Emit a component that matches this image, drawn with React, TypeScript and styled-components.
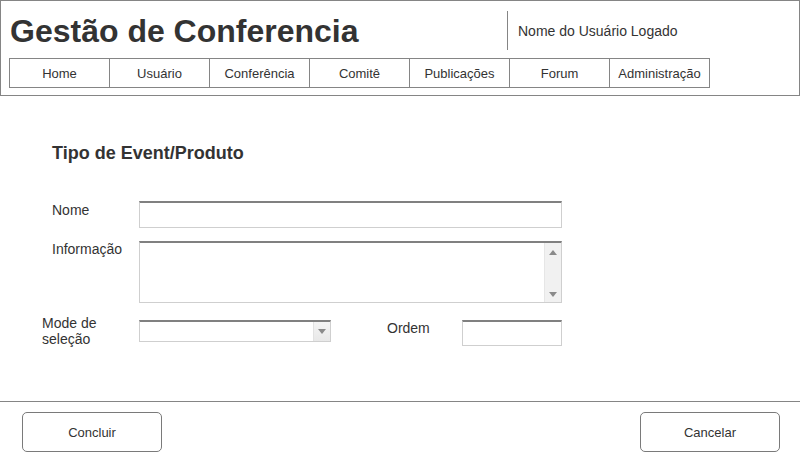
import React from "react";
import styled, { createGlobalStyle } from "styled-components";

const GlobalStyle = createGlobalStyle`
  html, body { margin: 0; padding: 0; background: #ffffff; }
  body { font-family: "Liberation Sans", Arial, sans-serif; color: #333333; }
  * { box-sizing: border-box; }
`;

const Page = styled.div`
  width: 800px;
  height: 452px;
  display: flex;
  flex-direction: column;
  overflow: hidden;
`;

const Header = styled.header`
  height: 96px;
  border: 1px solid #858585;
  padding: 0 0 7px 8px;
  display: flex;
  flex-direction: column;
`;

const TopRow = styled.div`
  height: 57px;
  display: flex;
  align-items: flex-start;
`;

const Title = styled.h1`
  margin: 12px 0 0 1px;
  width: 497px;
  font-size: 32px;
  line-height: 37px;
  font-weight: bold;
  color: #333333;
`;

const UserBlock = styled.div`
  margin-top: 10px;
  height: 39px;
  border-left: 1px solid #858585;
  padding-left: 10px;
  display: flex;
  align-items: center;
  font-size: 14px;
  line-height: 16px;
  color: #333333;
`;

const Nav = styled.nav`
  display: flex;
  border-left: 1px solid #858585;
  align-self: flex-start;
`;

const NavItem = styled.div`
  width: 100px;
  height: 30px;
  border-top: 1px solid #858585;
  border-bottom: 1px solid #858585;
  border-right: 1px solid #858585;
  display: flex;
  align-items: center;
  justify-content: center;
  font-size: 13px;
  color: #333333;
`;

const Main = styled.main`
  flex: 1;
  padding: 47px 0 0 42px;
  display: flex;
  flex-direction: column;
`;

const SectionTitle = styled.h2`
  margin: 0 0 1px 10px;
  font-size: 18px;
  line-height: 21px;
  font-weight: bold;
  color: #333333;
`;

const Row = styled.div<{ $gap: number }>`
  display: flex;
  align-items: flex-start;
  margin-top: ${(p) => p.$gap}px;
`;

const Label = styled.div<{ $indent?: number; $top?: number; $w?: number }>`
  width: ${(p) => p.$w ?? 97}px;
  padding-left: ${(p) => p.$indent ?? 0}px;
  margin-top: ${(p) => p.$top ?? 0}px;
  font-size: 14px;
  line-height: 16px;
  color: #333333;
`;

const Field = styled.div<{ $w: number; $h: number }>`
  position: relative;
  width: ${(p) => p.$w}px;
  height: ${(p) => p.$h}px;
  background: #ffffff;
  border: 1px solid #cfcfcf;
  border-top: 2px solid #808080;
`;

const Scrollbar = styled.div`
  position: absolute;
  top: 0;
  right: 0;
  bottom: 0;
  width: 17px;
  background: #f1f1f1;
  border-left: 1px solid #e6e6e6;
  display: flex;
  flex-direction: column;
  justify-content: space-between;
  align-items: center;
  padding: 7px 0 5px;
`;

const Arrow = styled.span<{ $dir: "up" | "down" }>`
  width: 0;
  height: 0;
  border-left: 4px solid transparent;
  border-right: 4px solid transparent;
  ${(p) =>
    p.$dir === "up"
      ? "border-bottom: 5px solid #8a8a8a;"
      : "border-top: 5px solid #8a8a8a;"}
`;

const DropButton = styled.div`
  position: absolute;
  top: 0;
  right: 0;
  bottom: 0;
  width: 17px;
  background: linear-gradient(#f4f4f4, #e8e8e8);
  border-left: 1px solid #e2e2e2;
  display: flex;
  align-items: center;
  justify-content: center;
`;

const Footer = styled.footer`
  height: 51px;
  border-top: 1px solid #858585;
  padding: 10px 20px 0 22px;
  display: flex;
  justify-content: space-between;
  align-items: flex-start;
`;

const Button = styled.button`
  width: 140px;
  height: 40px;
  border: 1px solid #7a7a7a;
  border-radius: 5px;
  background: #ffffff;
  font-family: "Liberation Sans", Arial, sans-serif;
  font-size: 13px;
  color: #333333;
  padding: 0;
`;

const navItems = [
  "Home",
  "Usuário",
  "Conferência",
  "Comitê",
  "Publicações",
  "Forum",
  "Administração",
];

export default function App() {
  return (
    <Page>
      <GlobalStyle />
      <Header>
        <TopRow>
          <Title>Gestão de Conferencia</Title>
          <UserBlock>Nome do Usuário Logado</UserBlock>
        </TopRow>
        <Nav>
          {navItems.map((n) => (
            <NavItem key={n}>{n}</NavItem>
          ))}
        </Nav>
      </Header>
      <Main>
        <SectionTitle>Tipo de Event/Produto</SectionTitle>
        <Row $gap={36}>
          <Label $indent={10} $top={1}>Nome</Label>
          <Field $w={423} $h={27} />
        </Row>
        <Row $gap={13}>
          <Label $indent={10}>Informação</Label>
          <Field $w={423} $h={62}>
            <Scrollbar>
              <Arrow $dir="up" />
              <Arrow $dir="down" />
            </Scrollbar>
          </Field>
        </Row>
        <Row $gap={17}>
          <Label $top={-5}>
            Mode de
            <br />
            seleção
          </Label>
          <Field $w={192} $h={22}>
            <DropButton>
              <Arrow $dir="down" />
            </DropButton>
          </Field>
          <Label $w={131} $indent={56} $top={0}>Ordem</Label>
          <Field $w={100} $h={26} />
        </Row>
      </Main>
      <Footer>
        <Button>Concluir</Button>
        <Button>Cancelar</Button>
      </Footer>
    </Page>
  );
}
